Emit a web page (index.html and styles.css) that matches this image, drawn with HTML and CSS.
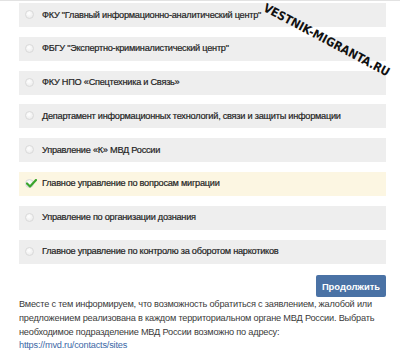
FILE: index.html
```html
<!DOCTYPE html>
<html lang="ru">
<head>
    <meta charset="UTF-8">
    <meta name="viewport" content="width=device-width, initial-scale=1.0">
    <title>Выбор подразделения</title>
    <link rel="stylesheet" href="styles.css">
</head>
<body>
    <div class="page">
        <form class="choices">
            <label class="choice"><span class="radio"></span>ФКУ "Главный информационно-аналитический центр"</label>
            <label class="choice"><span class="radio"></span>ФБГУ "Экспертно-криминалистический центр"</label>
            <label class="choice"><span class="radio"></span>ФКУ НПО «Спецтехника и Связь»</label>
            <label class="choice"><span class="radio"></span>Департамент информационных технологий, связи и защиты информации</label>
            <label class="choice"><span class="radio"></span>Управление «К» МВД России</label>
            <label class="choice checked"><span class="radio">
                <svg class="check" width="11" height="9" viewBox="0 0 11 9"><path d="M1 4.5 L4 7.5 L10 1" fill="none" stroke="#3aa52c" stroke-width="2.2" stroke-linecap="round" stroke-linejoin="round"/></svg>
            </span>Главное управление по вопросам миграции</label>
            <label class="choice"><span class="radio"></span>Управление по организации дознания</label>
            <label class="choice"><span class="radio"></span>Главное управление по контролю за оборотом наркотиков</label>
            <div class="actions">
                <button type="button">Продолжить</button>
            </div>
        </form>
        <p class="note">Вместе с тем информируем, что возможность обратиться с заявлением, жалобой или предложением реализована в каждом территориальном органе МВД России. Выбрать необходимое подразделение МВД России возможно по адресу: <a href="#">https://mvd.ru/contacts/sites</a></p>
        <span class="watermark">VESTNIK-MIGRANTA.RU</span>
    </div>
</body>
</html>
```

FILE: styles.css
```css
/* General styling */
body {
    margin: 0;
    font-family: 'Liberation Sans', Arial, sans-serif;
    background-color: #ffffff;
    color: #222222;
}

.page {
    position: relative;
    border-top: 1px solid #e2e2e2;
    padding: 2px 14px 0 19px;
}

/* Choice rows */
.choices {
    display: flex;
    flex-direction: column;
    gap: 9.8px;
}

.choice {
    display: flex;
    align-items: center;
    gap: 8px;
    height: 24px;
    padding-left: 6px;
    padding-bottom: 1px;
    box-sizing: border-box;
    background-color: #eeeeee;
    font-size: 9.2px;
    letter-spacing: -0.25px;
    color: #1e1e1e;
    -webkit-text-stroke: 0.2px #1e1e1e;
}

.choice.checked {
    background-color: #fcf6e2;
}

.radio {
    position: relative;
    width: 9px;
    height: 9px;
    border-radius: 50%;
    box-sizing: border-box;
    border: 1px solid #dadada;
    background: radial-gradient(circle at 40% 35%, #ffffff, #e6e6e6);
    flex-shrink: 0;
}

.check {
    position: absolute;
    left: 0;
    top: -1px;
}

/* Button */
.actions {
    display: flex;
    justify-content: flex-end;
    margin-top: 2px;
}

button {
    width: 70px;
    height: 22px;
    padding: 0;
    border: none;
    border-radius: 2px;
    background-color: #4a72a5;
    color: #ffffff;
    font-family: inherit;
    font-size: 9.4px;
    font-weight: bold;
}

/* Note text */
.note {
    margin: 1px 0 0;
    font-size: 9.2px;
    letter-spacing: -0.2px;
    line-height: 13.7px;
    color: #3a3a3a;
}

.note a {
    color: #3b68a6;
    text-decoration: none;
}

/* Watermark */
.watermark {
    position: absolute;
    left: 256px;
    top: 32px;
    font-family: 'DejaVu Sans Condensed', sans-serif;
    font-weight: bold;
    font-size: 12px;
    color: #111111;
    transform: rotate(28deg);
    transform-origin: center;
    white-space: nowrap;
}
```
